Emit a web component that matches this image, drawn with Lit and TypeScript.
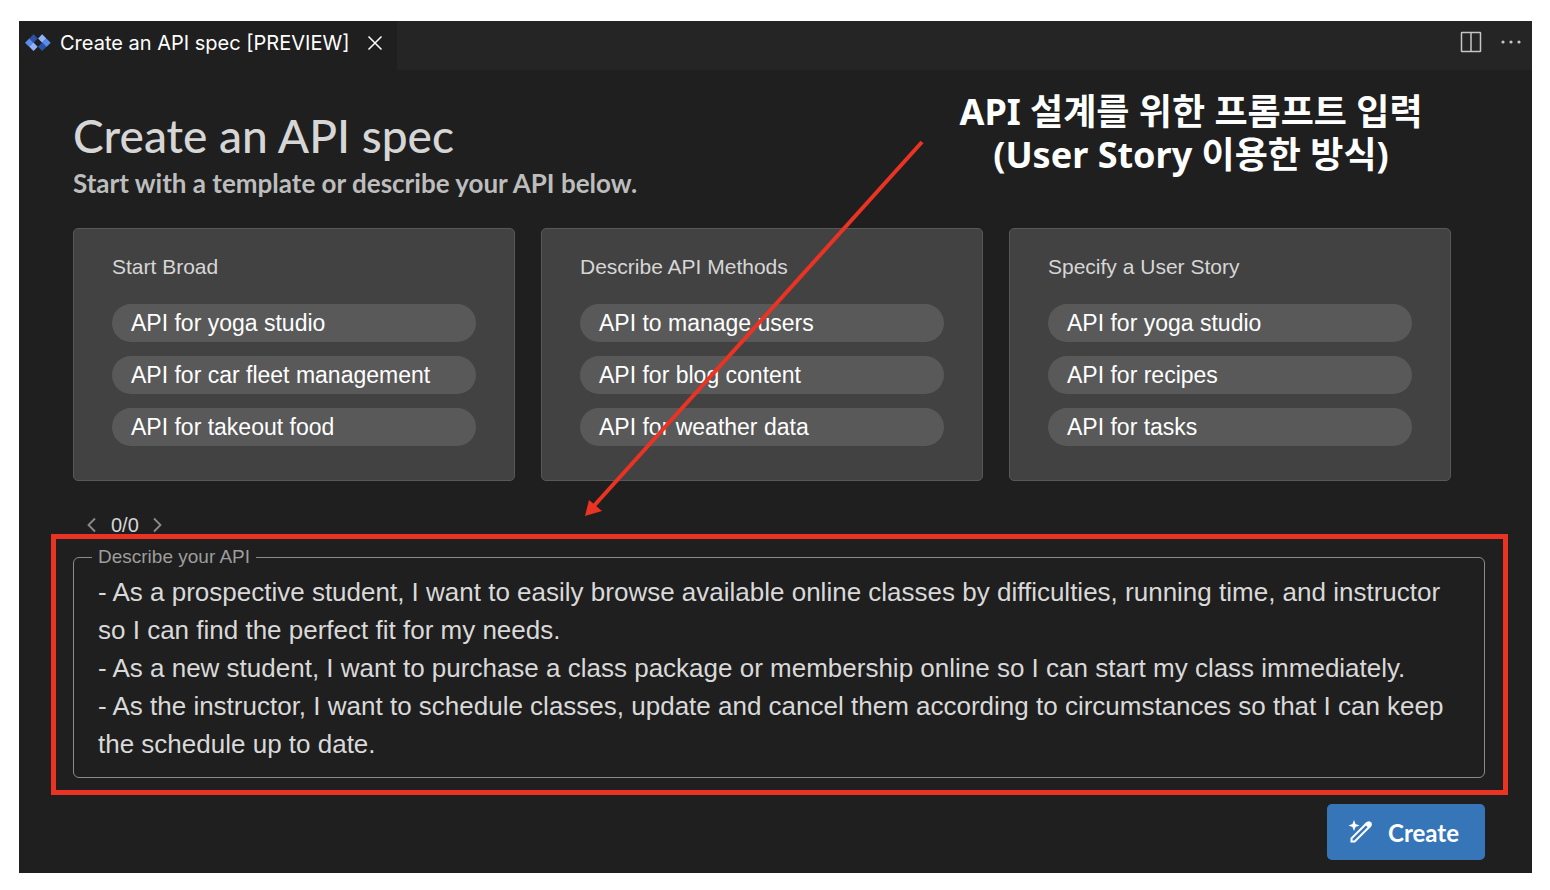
import { LitElement, html, css, svg } from "lit";
import { customElement, property, state } from "lit/decorators.js";

interface TemplateGroup {
  title: string;
  items: string[];
}

const GROUPS: TemplateGroup[] = [
  {
    title: "Start Broad",
    items: ["API for yoga studio", "API for car fleet management", "API for takeout food"],
  },
  {
    title: "Describe API Methods",
    items: ["API to manage users", "API for blog content", "API for weather data"],
  },
  {
    title: "Specify a User Story",
    items: ["API for yoga studio", "API for recipes", "API for tasks"],
  },
];

const PROMPT = [
  "- As a prospective student, I want to easily browse available online classes by difficulties, running time, and instructor so I can find the perfect fit for my needs.",
  "- As a new student, I want to purchase a class package or membership online so I can start my class immediately.",
  "- As the instructor, I want to schedule classes, update and cancel them according to circumstances so that I can keep the schedule up to date.",
].join("\n");

const chevron = (d: string) => svg`<path d=${d} fill="none" stroke="currentColor" stroke-width="1.8" />`;

@customElement("template-card")
export class TemplateCard extends LitElement {
  @property({ attribute: false }) group!: TemplateGroup;

  static styles = css`
    :host {
      display: block;
      box-sizing: border-box;
      padding: 26px 38px 34px;
      background: #424242;
      border: 1px solid #585858;
      border-radius: 5px;
    }
    .title {
      margin: 0 0 25px;
      font-size: 21px;
      line-height: 24px;
      font-weight: 400;
      color: #d6d6d6;
    }
    .list {
      display: grid;
      gap: 14px;
    }
    .chip {
      height: 38px;
      padding: 0 19px;
      border: 0;
      border-radius: 19px;
      background: #595959;
      color: #fff;
      font: inherit;
      font-size: 23px;
      line-height: 38px;
      text-align: left;
      cursor: pointer;
    }
  `;

  render() {
    return html`
      <h2 class="title">${this.group.title}</h2>
      <div class="list">
        ${this.group.items.map((t) => html`<button class="chip" type="button">${t}</button>`)}
      </div>
    `;
  }
}

@customElement("app-root")
export class AppRoot extends LitElement {
  @state() private prompt = PROMPT;

  static styles = css`
    :host {
      display: flex;
      box-sizing: border-box;
      min-height: 100vh;
      padding: 21px 18px 17px 19px;
      background: #fff;
      font-family: "Liberation Sans", Arial, sans-serif;
    }
    .window {
      position: relative;
      flex: 1;
      min-width: 0;
      background: #1f1f1f;
      color: #d6d6d6;
    }
    .tabs {
      display: flex;
      justify-content: space-between;
      height: 49px;
      background: #252525;
    }
    .tab {
      display: flex;
      align-items: center;
      gap: 9px;
      padding: 0 14px 5px 6px;
      background: #1f1f1f;
      color: #fff;
      font-family: Inter, sans-serif;
      font-size: 20px;
      line-height: 24px;
    }
    .icon-button {
      display: flex;
      padding: 0;
      border: 0;
      background: none;
      color: inherit;
      cursor: pointer;
    }
    .close {
      margin-left: 9px;
    }
    .actions {
      display: flex;
      align-items: center;
      gap: 18px;
      padding: 0 10px 7px 0;
      color: #c5c5c5;
    }
    .content {
      padding: 40px 47px 13px 54px;
    }
    .heading {
      margin: 0;
      font-family: Lato, sans-serif;
      font-size: 46px;
      line-height: 52px;
      font-weight: 500;
      color: #d6d6d6;
    }
    .subtitle {
      margin: 0 0 30px;
      font-family: Lato, sans-serif;
      font-size: 26px;
      line-height: 30px;
      padding-top: 6px;
      font-weight: 700;
      color: #bdbdbd;
    }
    .cards {
      display: grid;
      grid-template-columns: repeat(3, 1fr);
      gap: 26px;
      margin-right: 34px;
    }
    .pager {
      display: flex;
      align-items: center;
      gap: 13px;
      padding: 32px 0 8px 13px;
      font-size: 20px;
      line-height: 24px;
      color: #d6d6d6;
    }
    .pager .icon-button {
      color: #8c8c8c;
    }
    .field {
      position: relative;
    }
    .frame {
      min-width: 0;
      margin: 0;
      padding: 4px 24px 14px;
      border: 1px solid #8a8a8a;
      border-radius: 6px;
    }
    .legend {
      margin-left: -6px;
      padding: 0 6px;
      font-size: 19px;
      line-height: 24px;
      color: #9d9d9d;
    }
    .prompt {
      display: block;
      box-sizing: border-box;
      width: 100%;
      height: 190px;
      padding: 0;
      border: 0;
      outline: 0;
      resize: none;
      overflow: hidden;
      background: none;
      color: #d9d9d9;
      font-family: inherit;
      font-size: 26px;
      line-height: 38px;
    }
    .highlight {
      position: absolute;
      inset: -11px -23px -17px -22px;
      border: 5px solid #ea3323;
      pointer-events: none;
    }
    .footer {
      display: flex;
      justify-content: flex-end;
      padding-top: 26px;
    }
    .create {
      display: flex;
      align-items: center;
      gap: 15px;
      height: 56px;
      padding: 0 26px 0 21px;
      border: 0;
      border-radius: 5px;
      background: #3676b8;
      color: #fff;
      font-family: Lato, sans-serif;
      font-size: 24px;
      font-weight: 700;
      cursor: pointer;
    }
    .arrow {
      position: absolute;
      left: 0;
      top: 0;
      overflow: visible;
      pointer-events: none;
    }
    .note {
      position: absolute;
      top: 69px;
      left: 900px;
      width: 544px;
      margin: 0;
      text-align: center;
      font-family: "Noto Sans", "Noto Sans CJK KR", sans-serif;
      font-size: 36px;
      line-height: 43px;
      font-weight: 700;
      color: #fff;
      pointer-events: none;
    }
  `;

  private onInput(e: Event) {
    this.prompt = (e.target as HTMLTextAreaElement).value;
  }

  render() {
    return html`
      <main class="window">
        <div class="tabs">
          <div class="tab">
            <svg width="26" height="18" viewBox="0 0 26 18" aria-hidden="true">
              <path d="M8.500 0.300 12.700 4.500 8.500 8.700 4.300 4.500Z" fill="#2c52a8" />
              <path d="M4.300 4.500 8.500 8.700 4.300 12.900 0 8.700Z" fill="#5a8cf0" />
              <path d="M4.300 12.700 8.500 8.500 12.700 12.700 8.500 16.900Z" fill="#8fb2f8" />
              <path d="M17.200 0.300 21.400 4.500 17.200 8.700 13 4.500Z" fill="#8fb2f8" />
              <path d="M21.400 4.500 25.700 8.700 21.400 12.900 17.200 8.700Z" fill="#5a8cf0" />
              <path d="M17.200 8.500 21.400 12.700 17.200 16.900 13 12.700Z" fill="#2c52a8" />
            </svg>
            <span>Create an API spec [PREVIEW]</span>
            <button class="icon-button close" type="button" aria-label="Close">
              <svg width="16" height="16" viewBox="0 0 16 16">
                <path d="M1.500 1.500 14.500 14.500M14.500 1.500 1.500 14.500" stroke="currentColor" stroke-width="1.500" />
              </svg>
            </button>
          </div>
          <div class="actions">
            <button class="icon-button" type="button" aria-label="Split editor">
              <svg width="22" height="22" viewBox="0 0 22 22">
                <path d="M2 1.500h18q.5 0 .5 .5v18q0 .5-.5 .5h-18q-.5 0-.5-.5v-18q0-.5 .5-.5ZM11 1.500v19" fill="none" stroke="currentColor" stroke-width="1.500" />
              </svg>
            </button>
            <button class="icon-button" type="button" aria-label="More actions">
              <svg width="22" height="22" viewBox="0 0 22 22" fill="currentColor">
                <circle cx="3" cy="11" r="1.600" /><circle cx="11" cy="11" r="1.600" /><circle cx="19" cy="11" r="1.600" />
              </svg>
            </button>
          </div>
        </div>
        <div class="content">
          <h1 class="heading">Create an API spec</h1>
          <p class="subtitle">Start with a template or describe your API below.</p>
          <div class="cards">
            ${GROUPS.map((g) => html`<template-card .group=${g}></template-card>`)}
          </div>
          <nav class="pager" aria-label="Prompt history">
            <button class="icon-button" type="button" aria-label="Previous">
              <svg width="12" height="16" viewBox="0 0 12 16">${chevron("M9 1.500 2.500 8 9 14.500")}</svg>
            </button>
            <span>0/0</span>
            <button class="icon-button" type="button" aria-label="Next">
              <svg width="12" height="16" viewBox="0 0 12 16">${chevron("M2 1.500 8.500 8 2 14.500")}</svg>
            </button>
          </nav>
          <div class="field">
            <fieldset class="frame">
              <legend class="legend"><label for="prompt">Describe your API</label></legend>
              <textarea id="prompt" class="prompt" spellcheck="false" .value=${this.prompt} @input=${this.onInput}></textarea>
            </fieldset>
            <div class="highlight"></div>
          </div>
          <div class="footer">
            <button class="create" type="button">
              <svg width="25" height="25" viewBox="0 0 25 25" aria-hidden="true">
                <path d="M6 0 7.500 4 11.500 5.500 7.500 7 6 11 4.500 7 0.500 5.500 4.500 4Z" fill="currentColor" />
                <path d="M3.500 21.500v-3.200L18.500 3.500 21.700 6.500 6.700 21.500Z" fill="none" stroke="currentColor" stroke-width="2" />
                <path d="M16.500 4 19.200 1.700q2-1.200 3.800 .5t.5 3.800L21 8.500Z" fill="currentColor" />
              </svg>
              <span>Create</span>
            </button>
          </div>
        </div>
        <svg class="arrow" width="910" height="500" viewBox="0 0 910 500" aria-hidden="true">
          <path d="M903 121 573 487" stroke="#ea3323" stroke-width="4" />
          <path d="M566 495 570 479 583 490Z" fill="#ea3323" />
        </svg>
        <p class="note">API 설계를 위한 프롬프트 입력<br />(User Story 이용한 방식)</p>
      </main>
    `;
  }
}
